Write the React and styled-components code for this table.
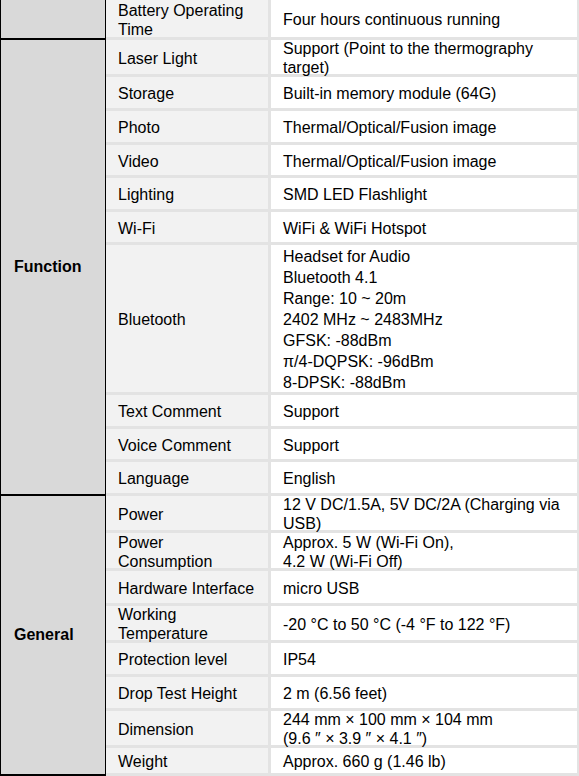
import React from "react";
import styled, { createGlobalStyle } from "styled-components";

const Global = createGlobalStyle`
  html, body { margin: 0; padding: 0; background: #ffffff; }
  body { font-family: "Liberation Sans", Arial, sans-serif; color: #000; }
`;

const Table = styled.div`
  display: grid;
  width: 579px;
  grid-template-columns: 106px 165px 308px;
  grid-template-rows: ${(p) => p.$rows};
  font-size: 16px;
  overflow: hidden;
`;

const GroupCell = styled.div`
  grid-column: 1;
  grid-row: span ${(p) => p.$span};
  box-sizing: border-box;
  background: #d9d9d9;
  border-left: 1px solid #000;
  border-right: 1px solid #000;
  border-bottom: 2px solid #000;
  display: flex;
  align-items: center;
  padding: 0 0 0 13px;
  font-weight: bold;
`;

const Cell = styled.div`
  grid-column: ${(p) => (p.$value ? 3 : 2)};
  box-sizing: border-box;
  display: flex;
  flex-direction: column;
  justify-content: center;
  padding: 2px 8px 0 12px;
  border-bottom: 3px solid #e3e3e3;
  border-right: ${(p) => (p.$value ? "2px" : "3px")} solid #e3e3e3;
  background: ${(p) => (p.$value ? "#ffffff" : "#f2f2f2")};
  line-height: ${(p) => (p.$spaced ? "21px" : "19px")};
  white-space: nowrap;
`;

const Line = styled.span`
  display: block;
`;

const groups = [
  {
    label: "",
    rows: [
      { name: ["Battery Operating", "Time"], value: ["Four hours continuous running"], h: 40 },
    ],
  },
  {
    label: "Function",
    rows: [
      { name: ["Laser Light"], value: ["Support (Point to the thermography", "target)"], h: 37 },
      { name: ["Storage"], value: ["Built-in memory module (64G)"], h: 34 },
      { name: ["Photo"], value: ["Thermal/Optical/Fusion image"], h: 34 },
      { name: ["Video"], value: ["Thermal/Optical/Fusion image"], h: 33 },
      { name: ["Lighting"], value: ["SMD LED Flashlight"], h: 34 },
      { name: ["Wi-Fi"], value: ["WiFi & WiFi Hotspot"], h: 33 },
      {
        name: ["Bluetooth"],
        value: [
          "Headset for Audio",
          "Bluetooth 4.1",
          "Range: 10 ~ 20m",
          "2402 MHz ~ 2483MHz",
          "GFSK: -88dBm",
          "π/4-DQPSK: -96dBm",
          "8-DPSK: -88dBm",
        ],
        h: 150,
        spaced: true,
      },
      { name: ["Text Comment"], value: ["Support"], h: 34 },
      { name: ["Voice Comment"], value: ["Support"], h: 33 },
      { name: ["Language"], value: ["English"], h: 34 },
    ],
  },
  {
    label: "General",
    rows: [
      { name: ["Power"], value: ["12 V DC/1.5A, 5V DC/2A (Charging via", "USB)"], h: 37 },
      { name: ["Power", "Consumption"], value: ["Approx. 5 W (Wi-Fi On),", "4.2 W (Wi-Fi Off)"], h: 38 },
      { name: ["Hardware Interface"], value: ["micro USB"], h: 35 },
      { name: ["Working", "Temperature"], value: ["-20 °C to 50 °C (-4 °F to 122 °F)"], h: 37 },
      { name: ["Protection level"], value: ["IP54"], h: 34 },
      { name: ["Drop Test Height"], value: ["2 m (6.56 feet)"], h: 34 },
      { name: ["Dimension"], value: ["244 mm × 100 mm × 104 mm", "(9.6 ″ × 3.9 ″ × 4.1 ″)"], h: 37 },
      { name: ["Weight"], value: ["Approx. 660 g (1.46 lb)"], h: 28 },
    ],
  },
];

export default function App() {
  const allRows = groups.flatMap((g) => g.rows);
  const rowTemplate = allRows.map((r) => `${r.h}px`).join(" ");
  return (
    <>
      <Global />
      <Table $rows={rowTemplate}>
        {groups.map((g, gi) =>
          g.rows.map((r, ri) => (
            <React.Fragment key={`${gi}-${ri}`}>
              {ri === 0 && <GroupCell $span={g.rows.length}>{g.label}</GroupCell>}
              <Cell>
                {r.name.map((t, i) => (
                  <Line key={i}>{t}</Line>
                ))}
              </Cell>
              <Cell $value $spaced={r.spaced}>
                {r.value.map((t, i) => (
                  <Line key={i}>{t}</Line>
                ))}
              </Cell>
            </React.Fragment>
          ))
        )}
      </Table>
    </>
  );
}
